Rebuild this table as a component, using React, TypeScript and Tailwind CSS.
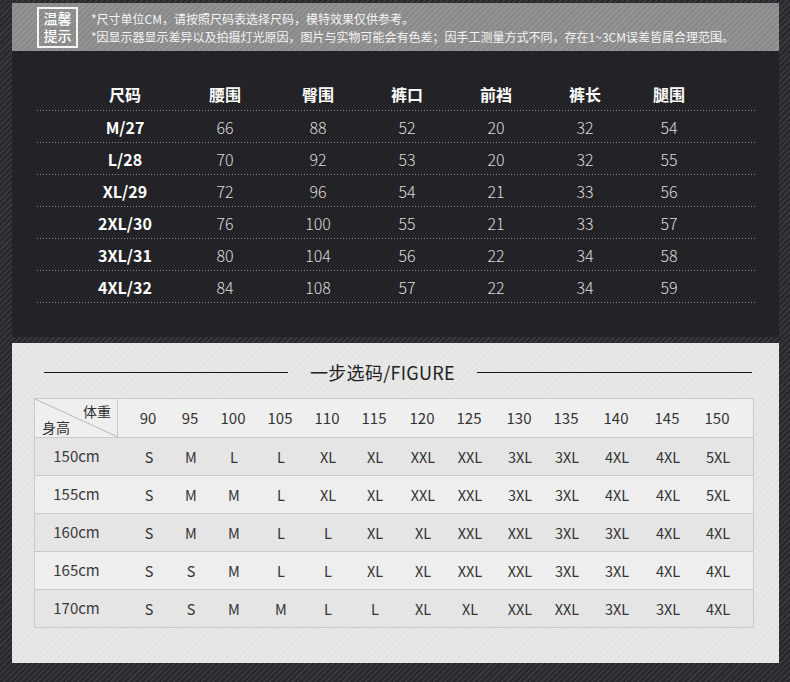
const measureHead = ['尺码', '腰围', '臀围', '裤口', '前裆', '裤长', '腿围']

const measureRows: [string, ...number[]][] = [
  ['M/27', 66, 88, 52, 20, 32, 54],
  ['L/28', 70, 92, 53, 20, 32, 55],
  ['XL/29', 72, 96, 54, 21, 33, 56],
  ['2XL/30', 76, 100, 55, 21, 33, 57],
  ['3XL/31', 80, 104, 56, 22, 34, 58],
  ['4XL/32', 84, 108, 57, 22, 34, 59],
]

const weights = [90, 95, 100, 105, 110, 115, 120, 125, 130, 135, 140, 145, 150]

const pickRows: [string, string[]][] = [
  ['150cm', ['S', 'M', 'L', 'L', 'XL', 'XL', 'XXL', 'XXL', '3XL', '3XL', '4XL', '4XL', '5XL']],
  ['155cm', ['S', 'M', 'M', 'L', 'XL', 'XL', 'XXL', 'XXL', '3XL', '3XL', '4XL', '4XL', '5XL']],
  ['160cm', ['S', 'M', 'M', 'L', 'L', 'XL', 'XL', 'XXL', 'XXL', '3XL', '3XL', '4XL', '4XL']],
  ['165cm', ['S', 'S', 'M', 'L', 'L', 'XL', 'XL', 'XXL', 'XXL', '3XL', '3XL', '4XL', '4XL']],
  ['170cm', ['S', 'S', 'M', 'M', 'L', 'L', 'XL', 'XL', 'XXL', 'XXL', '3XL', '3XL', '4XL']],
]

const measureGrid = 'grid grid-cols-[100px_100px_86px_92px_86px_92px_76px]'
// 13 weight columns
const weightGrid = 'grid grid-cols-[42px_42px_44px_50px_44px_50px_46px_48px_52px_42px_58px_44px_56px]'

function DottedLine() {
  return <div className="h-px w-full bg-[linear-gradient(to_right,#8e8e90_1px,transparent_1px)] bg-[length:3px_1px]" />
}

function Notice() {
  return (
    <div className="flex h-[48px] items-center bg-[repeating-linear-gradient(135deg,#959595_0px,#959595_1.5px,#8a8a8a_1.5px,#8a8a8a_4px)]">
      <div className="ml-[25px] flex h-[41px] w-[41px] flex-col items-center justify-center border-2 border-[#f5f5f5] text-[14px] leading-[17px] font-medium text-white">
        <span>温馨</span>
        <span>提示</span>
      </div>
      <div className="ml-[13px] flex flex-col gap-[5px] text-[12px] leading-[13px] text-[#f4f4f4]">
        <p>*尺寸单位CM，请按照尺码表选择尺码，模特效果仅供参考。</p>
        <p>*因显示器显示差异以及拍摄灯光原因，图片与实物可能会有色差；因手工测量方式不同，存在1~3CM误差皆属合理范围。</p>
      </div>
    </div>
  )
}

function MeasureTable() {
  return (
    <div className="h-[286px] bg-[#232327] pt-[27px]">
      <div className="ml-[25px] w-[719px]">
        <div className={`${measureGrid} h-[32px] items-center pl-[38px] text-[16px] font-bold text-white`}>
          {measureHead.map((h) => (
            <div key={h} className="text-center">{h}</div>
          ))}
        </div>
        <DottedLine />
        {measureRows.map(([size, ...nums]) => (
          <div key={size}>
            <div className={`${measureGrid} h-[31px] items-center pl-[38px] text-[16px]`}>
              <div className="text-center font-bold text-white">{size}</div>
              {nums.map((n, i) => (
                <div key={i} className="text-center font-light text-[#dcdcdc]">{n}</div>
              ))}
            </div>
            <DottedLine />
          </div>
        ))}
      </div>
    </div>
  )
}

function PickTable() {
  return (
    <div className="mt-[6px] h-[320px] bg-[repeating-linear-gradient(135deg,#e9e9e9_0px,#e9e9e9_1.5px,#e4e4e4_1.5px,#e4e4e4_4px)] pt-[17px]">
      <div className="flex h-[24px] items-center pl-[32px]">
        <div className="h-px w-[244px] bg-[#1a1a1a]" />
        <div className="mx-[22px] text-[18px] leading-[24px] tracking-[0.3px] text-[#222]">一步选码/FIGURE</div>
        <div className="h-px w-[275px] bg-[#1a1a1a]" />
      </div>

      <div className="ml-[22px] mt-[14px] w-[720px] border border-[#c9c9c9] text-[#333]">
        <div className="flex h-[38px] bg-[#f0efef]">
          <div className="relative h-full w-[83px] shrink-0 border-r border-[#c9c9c9]">
            <svg className="absolute inset-0" width="83" height="38" viewBox="0 0 83 38">
              <line x1="0" y1="0" x2="83" y2="38" stroke="#b8b8b8" strokeWidth="1" />
            </svg>
            <span className="absolute right-[6px] top-[3px] text-[14px] leading-[18px]">体重</span>
            <span className="absolute bottom-[1px] left-[7px] text-[14px] leading-[18px]">身高</span>
          </div>
          <div className={`${weightGrid} items-center pl-[9px] text-[15px]`}>
            {weights.map((w) => (
              <div key={w} className="text-center">{w}</div>
            ))}
          </div>
        </div>
        {pickRows.map(([height, sizes], r) => (
          <div
            key={height}
            className={`flex h-[38px] items-center border-t border-[#c9c9c9] ${r % 2 === 1 ? 'bg-[#efeeee]' : 'bg-[#e5e5e5]'}`}
          >
            <div className="w-[83px] shrink-0 text-center text-[15px] text-[#3a3a3a]">{height}</div>
            <div className={`${weightGrid} items-center pl-[10px] text-[14.5px]`}>
              {sizes.map((s, i) => (
                <div key={i} className="text-center">{s}</div>
              ))}
            </div>
          </div>
        ))}
      </div>
    </div>
  )
}

export default function App() {
  return (
    <div className="h-[682px] w-[790px] overflow-hidden bg-[repeating-linear-gradient(135deg,#3a3a3e_0px,#3a3a3e_1.5px,#29292d_1.5px,#29292d_4px)] pl-[12px] pr-[11px] pt-[3px] font-['Noto_Sans_CJK_SC','Noto_Sans',sans-serif]">
      <Notice />
      <MeasureTable />
      <PickTable />
    </div>
  )
}
